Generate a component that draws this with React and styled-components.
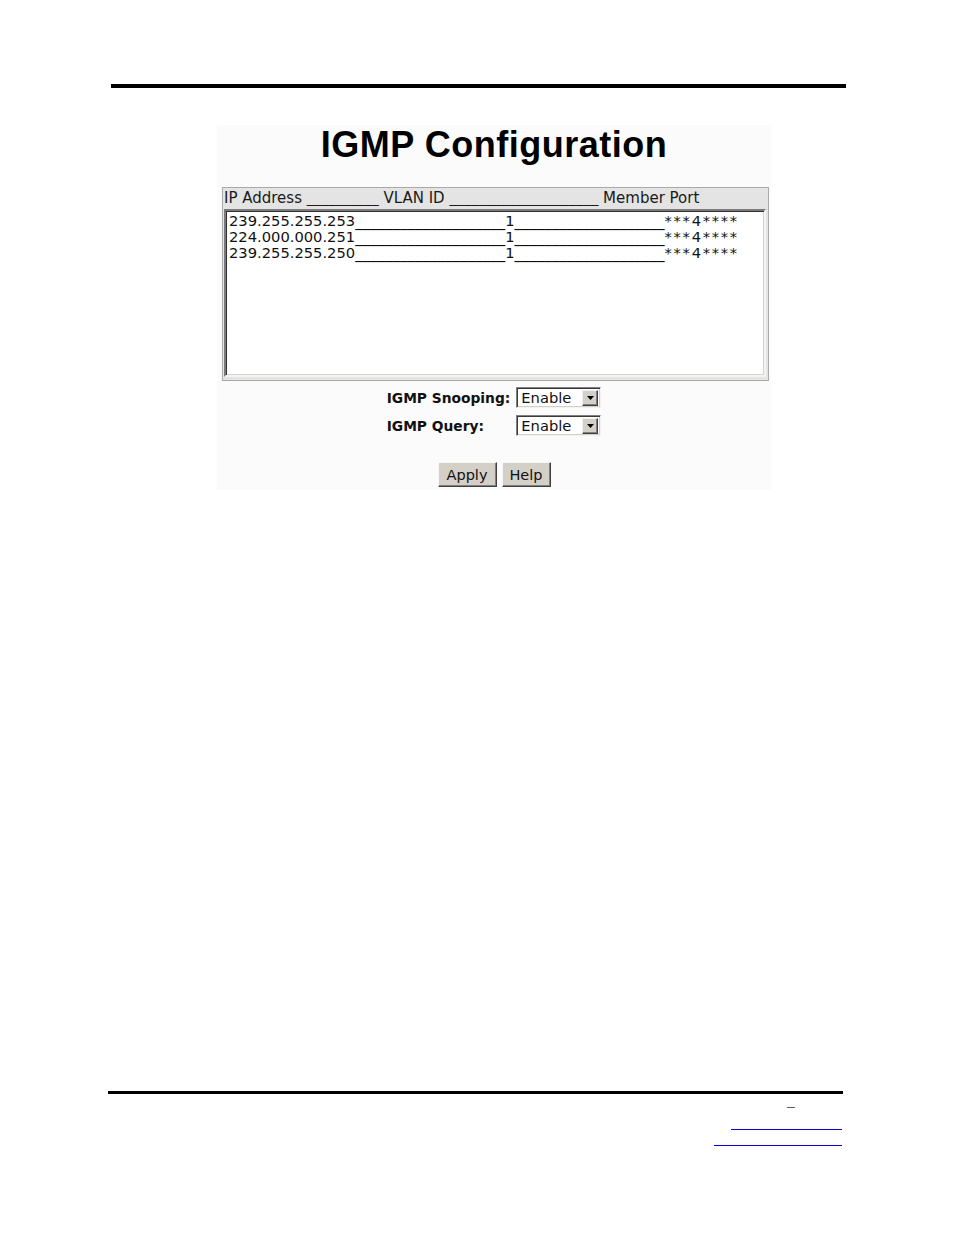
import styled, { createGlobalStyle } from 'styled-components';

const GlobalStyle = createGlobalStyle`
  html, body {
    margin: 0;
    padding: 0;
    background: #ffffff;
  }
  body {
    font-family: "DejaVu Sans", "Liberation Sans", sans-serif;
    color: #000;
  }
`;

const rows = [
  { ip: '239.255.255.253', vlan: '1', ports: '***4****' },
  { ip: '224.000.000.251', vlan: '1', ports: '***4****' },
  { ip: '239.255.255.250', vlan: '1', ports: '***4****' },
];

// underscore runs, each sized so n glyphs fill the wanted width
const Under = ({ n, w }) => (
  <Fill $size={w / (n * 0.5)}>{'_'.repeat(n)}</Fill>
);

const Arrow = () => (
  <ArrowBtn>
    <svg width="7" height="4" viewBox="0 0 7 4">
      <path d="M0 0h7L3.5 4z" fill="#000" />
    </svg>
  </ArrowBtn>
);

const App = () => {
  return (
    <>
      <GlobalStyle />
      <Page>
        <TopRule />
        <Shot>
          <Title>IGMP Configuration</Title>
          <Panel>
            <HeadRow>
              IP Address <Under n={10} w={72} /> VLAN ID <Under n={20} w={149} /> Member Port
            </HeadRow>
            <ListBox>
              {rows.map((r) => (
                <Row key={r.ip}>
                  {r.ip}
                  <Under n={20} w={150} />
                  {r.vlan}
                  <Under n={20} w={150} />
                  <Ports>{r.ports}</Ports>
                </Row>
              ))}
            </ListBox>
          </Panel>
          <Controls>
            <Label>IGMP Snooping:</Label>
            <Select>
              <SelectValue>Enable</SelectValue>
              <Arrow />
            </Select>
            <Label>IGMP Query:</Label>
            <Select>
              <SelectValue>Enable</SelectValue>
              <Arrow />
            </Select>
          </Controls>
          <ButtonRow>
            <Button $w={59}>Apply</Button>
            <Button $w={49}>Help</Button>
          </ButtonRow>
        </Shot>
        <Footer>
          <BottomRule />
          <FooterMeta>
            <Dash>–</Dash>
            <LinkLine $w={111} $top={16} />
            <LinkLine $w={128} $top={15} />
          </FooterMeta>
        </Footer>
      </Page>
    </>
  );
};

export default App;

const Page = styled.div`
  width: 954px;
  height: 1235px;
  display: flex;
  flex-direction: column;
  overflow: hidden;
`;

const TopRule = styled.div`
  margin: 84px 0 0 111px;
  width: 735px;
  height: 4px;
  background: #000;
`;

const Shot = styled.div`
  margin: 37px 0 0 217px;
  width: 554px;
  height: 365px;
  background: #fbfbfb;
  display: flex;
  flex-direction: column;
  align-items: stretch;
`;

const Title = styled.h1`
  margin: 0;
  font-family: "Liberation Sans", Arial, sans-serif;
  font-weight: bold;
  font-size: 36px;
  letter-spacing: 0.5px;
  line-height: 40px;
  text-align: center;
  color: #000;
`;

const Panel = styled.div`
  margin: 22px 2px 0 5px;
  border: 1px solid #a9a9a9;
  background: #e4e4e4;
  padding: 0 2px 3px 1px;
  display: flex;
  flex-direction: column;
`;

const HeadRow = styled.div`
  height: 20px;
  line-height: 20px;
  font-size: 15px;
  color: #1a1a1a;
  white-space: nowrap;
`;

const ListBox = styled.div`
  height: 162px;
  margin-top: 1px;
  background: #fff;
  border-top: 2px solid #7a7a7a;
  border-left: 2px solid #7a7a7a;
  border-right: 2px solid #f4f4f2;
  border-bottom: 2px solid #f4f4f2;
  box-shadow: inset 1px 1px 0 #303030, inset -1px -1px 0 #d6d3cc;
  padding: 2px 0 0 3px;
`;

const Row = styled.div`
  height: 16px;
  line-height: 16px;
  font-size: 14.7px;
  white-space: nowrap;
  color: #111;
`;

const Fill = styled.span`
  font-size: ${({ $size }) => $size}px;
  white-space: nowrap;
`;

const Ports = styled.span`
  letter-spacing: 1.7px;
`;

const Controls = styled.div`
  margin-top: 6px;
  display: grid;
  grid-template-columns: auto auto;
  justify-content: center;
  align-items: center;
  column-gap: 6px;
  row-gap: 7px;
`;

const Label = styled.span`
  font-size: 13.8px;
  font-weight: bold;
  color: #111;
  white-space: nowrap;
`;

const Select = styled.div`
  width: 85px;
  height: 21px;
  box-sizing: border-box;
  display: flex;
  align-items: center;
  background: #fff;
  border-top: 1px solid #808080;
  border-left: 1px solid #808080;
  border-right: 1px solid #f2f2f2;
  border-bottom: 1px solid #f2f2f2;
  box-shadow: inset 1px 1px 0 #3a3a3a, inset -1px -1px 0 #d4d0c8;
  padding: 2px;
`;

const SelectValue = styled.span`
  flex: 1;
  padding-left: 2px;
  font-size: 14.7px;
  line-height: 17px;
  color: #111;
`;

const ArrowBtn = styled.span`
  width: 16px;
  height: 16px;
  box-sizing: border-box;
  display: flex;
  align-items: center;
  justify-content: center;
  background: #d4d0c8;
  border-top: 1px solid #f0f0f0;
  border-left: 1px solid #f0f0f0;
  border-right: 1px solid #404040;
  border-bottom: 1px solid #404040;
  box-shadow: inset -1px -1px 0 #808080;
`;

const ButtonRow = styled.div`
  margin-top: 26px;
  display: flex;
  justify-content: center;
  gap: 5px;
`;

const Button = styled.button`
  width: ${({ $w }) => $w}px;
  height: 25px;
  padding: 0;
  font-family: "DejaVu Sans", sans-serif;
  font-size: 14.5px;
  color: #111;
  background: #d4d0c8;
  border-top: 1px solid #f6f6f6;
  border-left: 1px solid #f6f6f6;
  border-right: 1px solid #404040;
  border-bottom: 1px solid #404040;
  box-shadow: inset -1px -1px 0 #808080;
`;

const Footer = styled.div`
  margin: 601px 0 0 108px;
  width: 735px;
  display: flex;
  flex-direction: column;
`;

const BottomRule = styled.div`
  height: 3px;
  background: #000;
`;

const FooterMeta = styled.div`
  display: flex;
  flex-direction: column;
  align-items: flex-end;
  padding-right: 1px;
`;

const Dash = styled.span`
  align-self: flex-start;
  margin: 5px 0 0 679px;
  font-family: "Liberation Sans", Arial, sans-serif;
  font-size: 14px;
  line-height: 14px;
  color: #555;
`;

const LinkLine = styled.span`
  display: block;
  width: ${({ $w }) => $w}px;
  height: 0;
  border-bottom: 1px solid #0000c8;
  margin-top: ${({ $top }) => $top}px;
`;
